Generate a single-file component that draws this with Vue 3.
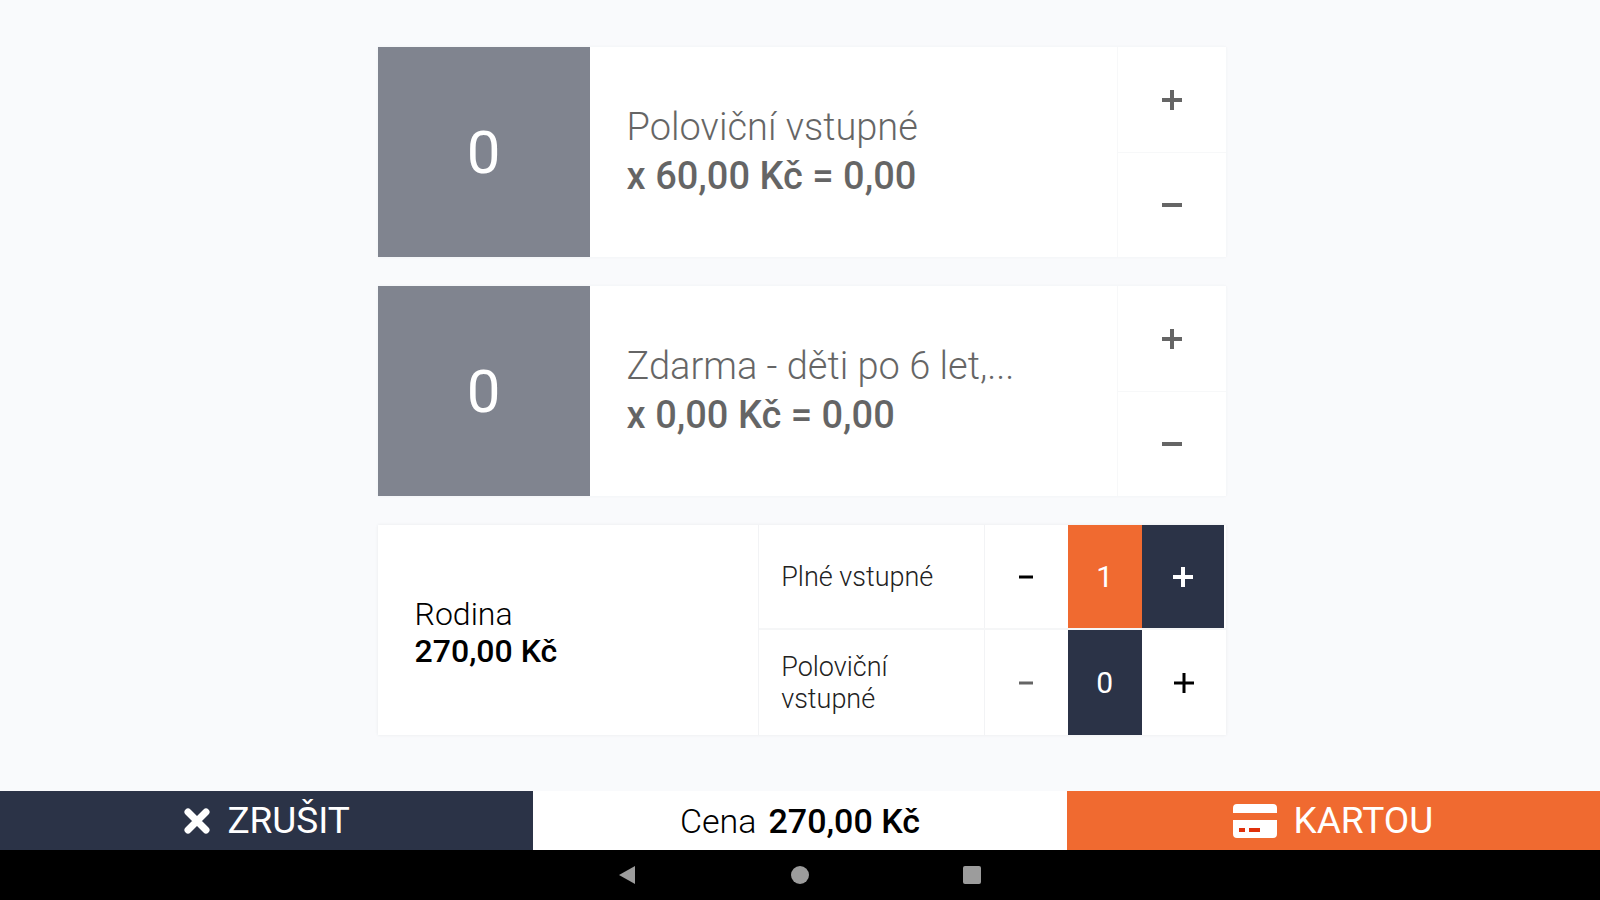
<script setup>
import { ref, computed } from 'vue'

const tickets = ref([
  { name: 'Poloviční vstupné', price: 60, count: 0 },
  { name: 'Zdarma - děti po 6 let,...', price: 0, count: 0 },
])

const family = ref({
  name: 'Rodina',
  price: 270,
  members: [
    { name: 'Plné vstupné', count: 1 },
    { name: 'Poloviční vstupné', count: 0 },
  ],
})

const money = (value) => value.toFixed(2).replace('.', ',')

const total = computed(
  () =>
    tickets.value.reduce((sum, t) => sum + t.price * t.count, 0) +
    (family.value.members.some((m) => m.count > 0) ? family.value.price : 0)
)

function change(item, step) {
  item.count = Math.max(0, item.count + step)
}
</script>

<template>
  <div class="screen">
    <main class="list">
      <article v-for="t in tickets" :key="t.name" class="card ticket" :class="{ idle: t.count === 0 }">
        <output class="count">{{ t.count }}</output>
        <div class="info">
          <h2 class="name">{{ t.name }}</h2>
          <p class="sum">x {{ money(t.price) }} Kč = {{ money(t.price * t.count) }}</p>
        </div>
        <div class="stepper">
          <button type="button" :aria-label="'Přidat ' + t.name" @click="change(t, 1)">
            <svg width="20" height="20" viewBox="0 0 20 20"><path d="M0 10H20M10 0V20" /></svg>
          </button>
          <button type="button" :aria-label="'Ubrat ' + t.name" @click="change(t, -1)">
            <svg width="20" height="20" viewBox="0 0 20 20"><path d="M0 10H20" /></svg>
          </button>
        </div>
      </article>

      <article class="card family">
        <div class="family-info">
          <h2 class="family-name">{{ family.name }}</h2>
          <p class="family-price">{{ money(family.price) }} Kč</p>
        </div>
        <div class="members">
          <div v-for="m in family.members" :key="m.name" class="member" :class="{ active: m.count > 0 }">
            <span class="member-name">{{ m.name }}</span>
            <button type="button" class="minus" :aria-label="'Ubrat ' + m.name" @click="change(m, -1)">
              <svg width="14" height="20" viewBox="0 0 14 20"><path d="M0 10H14" /></svg>
            </button>
            <output class="member-count">{{ m.count }}</output>
            <button type="button" class="plus" :aria-label="'Přidat ' + m.name" @click="change(m, 1)">
              <svg width="22" height="22" viewBox="0 0 22 22"><path d="M1 11H21M11 1V21" /></svg>
            </button>
          </div>
        </div>
      </article>
    </main>

    <footer class="checkout">
      <button type="button" class="cancel">
        <svg width="28" height="28" viewBox="0 0 28 28"><path d="M5 5L23 23M23 5L5 23" /></svg>
        <span>ZRUŠIT</span>
      </button>
      <p class="total">
        <span>Cena</span>
        <strong>{{ money(total) }} Kč</strong>
      </p>
      <button type="button" class="pay">
        <svg width="44" height="36" viewBox="0 0 44 36">
          <path class="card-shape" d="M4 1H40Q44 1 44 5V10H0V5Q0 1 4 1ZM0 17H44V31Q44 35 40 35H4Q0 35 0 31Z" />
          <path class="card-marks" d="M6 25H12V29H6ZM16 25H27V29H16Z" />
        </svg>
        <span>KARTOU</span>
      </button>
    </footer>

    <nav class="system" aria-label="Systém">
      <button type="button" aria-label="Zpět">
        <svg width="20" height="20" viewBox="0 0 20 20"><path d="M1 10L17 1V19Z" /></svg>
      </button>
      <button type="button" aria-label="Domů">
        <svg width="20" height="20" viewBox="0 0 20 20"><circle cx="10" cy="10" r="9" /></svg>
      </button>
      <button type="button" aria-label="Přehled">
        <svg width="20" height="20" viewBox="0 0 20 20"><rect x="1" y="1" width="18" height="18" rx="2" /></svg>
      </button>
    </nav>
  </div>
</template>

<style>
body {
  background: #f9fafc;
}
</style>

<style scoped>
.screen {
  display: flex;
  flex-direction: column;
  min-height: 100vh;
  background: #f9fafc;
  color: #000;
  font-family: Roboto, "Liberation Sans", sans-serif;
}

h2,
p {
  margin: 0;
}

button {
  display: flex;
  align-items: center;
  justify-content: center;
  margin: 0;
  padding: 0;
  border: 0;
  background: none;
  color: inherit;
  font: inherit;
  cursor: pointer;
}

svg {
  display: block;
  flex: none;
  fill: none;
  stroke: currentColor;
  stroke-width: 4;
}

.list {
  flex: 1;
  display: flex;
  flex-direction: column;
  gap: 29px;
  width: 53%;
  margin-left: 23.6%;
  padding: 47px 0 40px;
}

.card {
  display: flex;
  min-height: 210px;
  background: #fff;
  box-shadow: 0 0 3px rgba(40, 50, 70, 0.08);
}

.ticket.idle {
  box-shadow: 0 0 3px rgba(40, 50, 70, 0.05);
}

.count {
  display: flex;
  align-items: center;
  justify-content: center;
  width: 25%;
  background: #2b3347;
  color: #fff;
  font-size: 60px;
}

.info {
  flex: 1;
  display: flex;
  flex-direction: column;
  justify-content: center;
  padding: 0 37px;
  font-size: 38px;
  line-height: 49px;
}

.name {
  font-size: inherit;
  font-weight: 300;
}

.sum {
  font-weight: 500;
}

.stepper {
  display: grid;
  grid-template-rows: 1fr 1fr;
  width: 108px;
  border-left: 1px solid #f7f8f9;
}

.stepper button + button {
  border-top: 1px solid #f7f8f9;
}

.idle .count {
  background: #80848f;
}

.idle .info,
.idle .stepper svg {
  opacity: 0.6;
}

.family-info {
  flex: 1;
  display: flex;
  flex-direction: column;
  justify-content: center;
  padding: 6px 37px 0;
  font-size: 32px;
  line-height: 37px;
}

.family-name {
  font-size: inherit;
  font-weight: 300;
}

.family-price {
  font-weight: 500;
}

.members {
  display: grid;
  grid-template-rows: 1fr 1fr;
  width: 55%;
  border-left: 1px solid #f2f3f5;
}

.member {
  display: grid;
  grid-template-columns: 1fr 84px 74px 84px;
}

.member:first-child {
  border-bottom: 2px solid #f5f6f7;
}

.member-name {
  align-self: center;
  padding: 0 22px;
  color: #222;
  font-size: 27px;
  font-weight: 300;
  line-height: 32px;
}

.minus {
  border-left: 1px solid #f2f3f5;
}

.minus svg,
.plus svg {
  stroke-width: 3;
}

.member:not(.active) .minus svg {
  opacity: 0.6;
}

.member-count {
  display: flex;
  align-items: center;
  justify-content: center;
  background: #2b3347;
  color: #fff;
  font-size: 30px;
}

.active .member-count {
  background: #f06a30;
}

.active .plus {
  margin-right: 2px;
  background: #2b3347;
  color: #fff;
}

.active .plus svg {
  stroke-width: 4;
}

.checkout {
  display: grid;
  grid-template-columns: 1fr 1fr 1fr;
  min-height: 59px;
  background: #fff;
}

.cancel,
.pay {
  gap: 16px;
  color: #fff;
  font-size: 37px;
  line-height: 44px;
}

.cancel {
  background: #2b3347;
}

.cancel svg {
  stroke-width: 7;
  stroke-linecap: round;
}

.pay {
  background: #f06a30;
}

.card-shape {
  fill: #fff;
  stroke: none;
}

.card-marks {
  fill: #e0300a;
  stroke: none;
}

.total {
  display: flex;
  align-items: center;
  justify-content: center;
  gap: 12px;
  font-size: 34px;
  font-weight: 300;
  line-height: 44px;
}

.total strong {
  font-weight: 500;
}

.system {
  display: flex;
  align-items: center;
  justify-content: center;
  gap: 152px;
  height: 50px;
  background: #000;
  color: #9c9c9c;
}

.system svg {
  fill: currentColor;
  stroke: none;
}
</style>
